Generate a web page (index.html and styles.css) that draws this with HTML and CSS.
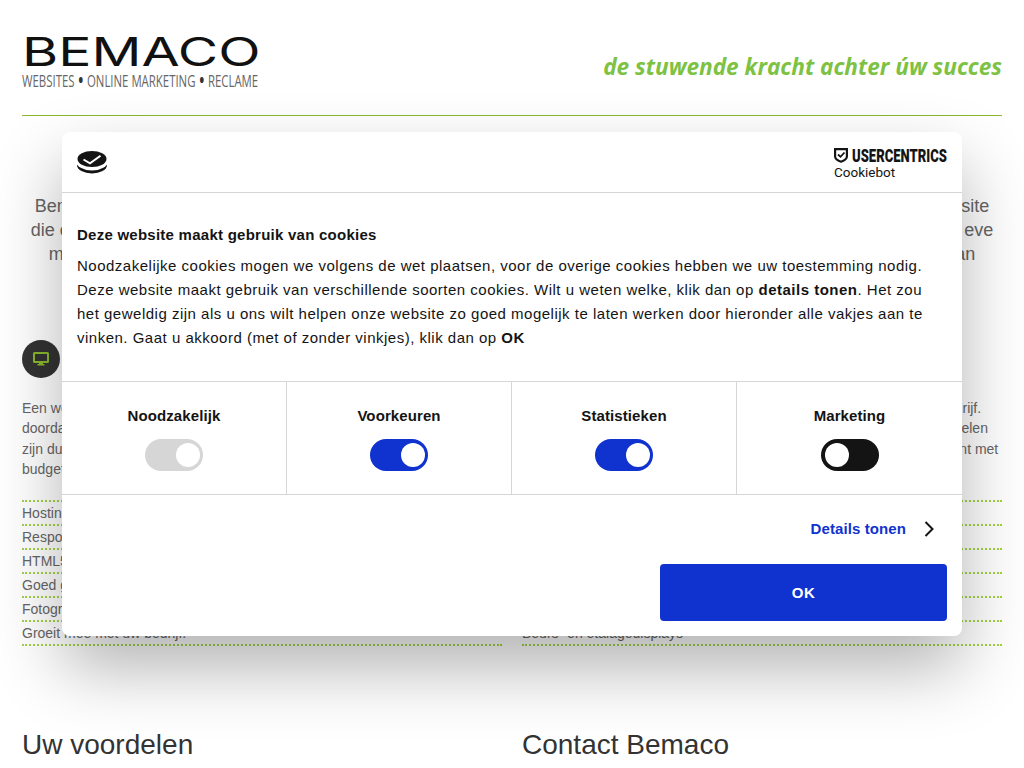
FILE: index.html
```html
<!DOCTYPE html>
<html lang="nl">
<head>
    <meta charset="UTF-8">
    <meta name="viewport" content="width=device-width, initial-scale=1.0">
    <title>Bemaco</title>
    <link rel="stylesheet" href="styles.css">
</head>
<body>
    <div class="page">
        <header class="site-header">
            <div class="brand">
                <div class="brand-name">BEMACO</div>
                <div class="brand-sub">WEBSITES <span class="dot">•</span> ONLINE MARKETING <span class="dot">•</span> RECLAME</div>
            </div>
            <div class="slogan">de stuwende kracht achter úw succes</div>
        </header>

        <p class="intro">
            Bemaco is uw vaste partner voor websites, online marketing en reclame. Wij maken al voor u een professionele website<br>
            die op elk apparaat goed werkt en uw bedrijf beter vindbaar maakt. Ook verzorgen wij al uw reclame, gewoon vlot en eve<br>
            met veel aandacht voor uw bedrijf en voor een eerlijke prijs. Neem dus gerust contact met mij op voor een goed plan
        </p>

        <div class="columns">
            <section class="col">
                <div class="col-head">
                    <span class="round-icon">
                        <svg width="16" height="14" viewBox="0 0 16 14">
                            <rect x="1" y="1" width="14" height="9" rx="0.5" fill="none" stroke="#8ab82c" stroke-width="2"/>
                            <path fill="#8ab82c" d="M6 11h4v1h1.500v1.500h-7V12H6z"/>
                        </svg>
                    </span>
                    <h2>Websites</h2>
                </div>
                <p class="col-text">Een website is het visitekaartje van uw bedrijf. Wij zorgen voor een goede uitstraling<br>doordat wij goed luisteren naar wat u wilt vertellen aan uw klanten en bezoekers<br>zijn duidelijk en eenvoudig te beheren, ook voor kleine ondernemers met een klein<br>budget.</p>
                <ul class="checklist">
                    <li>Hosting en domeinnaam</li>
                    <li>Responsive webdesign</li>
                    <li>HTML5 en CSS3</li>
                    <li>Goed gevonden in Google</li>
                    <li>Fotografie en teksten</li>
                    <li>Groeit mee met uw bedrijf.</li>
                </ul>
            </section>
            <section class="col">
                <div class="col-head">
                    <span class="round-icon"></span>
                    <h2>Reclame</h2>
                </div>
                <p class="col-text">Opvallende reclame zorgt voor wat naamsbekendheid van uw hele bedrijf.<br>Van visitekaartje tot aan de autobelettering, wij verzorgen al die onderdelen<br>en stemmen alles op elkaar af zodat uw huisstijl past, ook voor een klant met<br>een klein budget.</p>
                <ul class="checklist">
                    <li>Huisstijl en logo</li>
                    <li>Drukwerk</li>
                    <li>Autobelettering</li>
                    <li>Spandoeken</li>
                    <li>Gevelreclame</li>
                    <li>Beurs- en etalagedisplays</li>
                </ul>
            </section>
        </div>

        <div class="columns lower">
            <h2 class="lower-title">Uw voordelen</h2>
            <h2 class="lower-title">Contact Bemaco</h2>
        </div>
    </div>

    <div class="cookie-dialog">
        <div class="cookie-top">
            <svg class="cookie-logo" width="30" height="24" viewBox="0 0 30 24">
                <ellipse cx="15" cy="15" rx="15" ry="8.500" fill="#141414"/>
                <ellipse cx="15" cy="11" rx="16" ry="9.500" fill="#fff"/>
                <ellipse cx="15" cy="9" rx="14.500" ry="8" fill="#141414"/>
                <path fill="none" stroke="#fff" stroke-width="2" d="M6.500 9.500l6.500 3.800 10.500-7.500"/>
            </svg>
            <div class="uc-logo">
                <div class="uc-name">
                    <svg width="14" height="15" viewBox="0 0 14 15">
                        <path fill="none" stroke="#141414" stroke-width="2.200" d="M1.100 1.100h11.800v7.400c0 2.500-3 4.200-5.900 5.200-2.900-1-5.900-2.700-5.900-5.200z"/>
                        <path fill="none" stroke="#141414" stroke-width="1.800" d="M4 6.500l2.500 2.300L10.500 4.500"/>
                    </svg>
                    <span class="uc-word">USERCENTRICS</span>
                </div>
                <div class="uc-product">Cookiebot</div>
            </div>
        </div>

        <div class="cookie-body">
            <h3>Deze website maakt gebruik van cookies</h3>
            <p>Noodzakelijke cookies mogen we volgens de wet plaatsen, voor de overige cookies hebben we uw toestemming nodig. Deze website maakt gebruik van verschillende soorten cookies. Wilt u weten welke, klik dan op <b>details tonen</b>. Het zou het geweldig zijn als u ons wilt helpen onze website zo goed mogelijk te laten werken door hieronder alle vakjes aan te vinken. Gaat u akkoord (met of zonder vinkjes), klik dan op <b>OK</b></p>
        </div>

        <div class="toggles">
            <div class="toggle-cell">
                <strong>Noodzakelijk</strong>
                <span class="switch disabled"><span class="knob"></span></span>
            </div>
            <div class="toggle-cell">
                <strong>Voorkeuren</strong>
                <span class="switch on"><span class="knob"></span></span>
            </div>
            <div class="toggle-cell">
                <strong>Statistieken</strong>
                <span class="switch on"><span class="knob"></span></span>
            </div>
            <div class="toggle-cell">
                <strong>Marketing</strong>
                <span class="switch off"><span class="knob"></span></span>
            </div>
        </div>

        <div class="cookie-actions">
            <div class="details-link">
                <span>Details tonen</span>
                <svg width="10" height="16" viewBox="0 0 10 16"><path fill="none" stroke="#141414" stroke-width="2" d="M1.500 1l7 7-7 7"/></svg>
            </div>
            <button class="ok-btn">OK</button>
        </div>
    </div>
</body>
</html>
```

FILE: styles.css
```css
html, body {
    margin: 0;
    height: 768px;
    overflow: hidden;
    background-color: #fff;
}
body {
    font-family: "Liberation Sans", Arial, sans-serif;
    color: #666;
}
.page {
    padding: 0 22px;
}
.site-header {
    display: flex;
    justify-content: space-between;
    align-items: flex-start;
    height: 115px;
    border-bottom: 1px solid #8ab82c;
}
.brand {
    width: 236px;
    padding-top: 32px;
    white-space: nowrap;
}
.brand-name {
    font-family: "Inter", sans-serif;
    font-size: 39px;
    line-height: 39px;
    color: #111;
    transform: scaleX(1.42);
    transform-origin: left center;
}
.brand-sub {
    font-family: "Open Sans", sans-serif;
    font-size: 17px;
    line-height: 20px;
    color: #666;
    transform: scaleX(0.67);
    transform-origin: left center;
}
.dot {
    font-size: 26px;
    line-height: 0;
    color: #333;
    vertical-align: -2px;
}
.slogan {
    font-family: "Open Sans", sans-serif;
    font-style: italic;
    font-weight: 700;
    font-size: 22.600px;
    line-height: 30px;
    margin-top: 52px;
    color: #7dc242;
    white-space: nowrap;
}
.intro {
    margin: 78px 0 0;
    font-size: 18px;
    line-height: 24px;
    text-align: center;
    white-space: nowrap;
}
.columns {
    display: grid;
    grid-template-columns: 480px 480px;
    gap: 20px;
}
.col-head {
    display: flex;
    align-items: center;
    gap: 12px;
    margin-top: 74px;
}
.col-head h2 {
    margin: 0;
    font-size: 28px;
    font-weight: normal;
    color: #333;
}
.round-icon {
    display: flex;
    align-items: center;
    justify-content: center;
    width: 38px;
    height: 38px;
    border-radius: 50%;
    background-color: #333;
}
.col-text {
    margin: 20px 0 0;
    font-size: 14px;
    line-height: 20.300px;
    white-space: nowrap;
}
.checklist {
    list-style: none;
    margin: 21px 0 0;
    padding: 0;
    font-size: 14px;
    border-top: 2px dotted #a4d246;
}
.checklist li {
    height: 22px;
    line-height: 22px;
    border-bottom: 2px dotted #a4d246;
}
.lower {
    margin-top: 81px;
}
.lower-title {
    margin: 0;
    font-size: 28px;
    line-height: 36px;
    font-weight: normal;
    color: #333;
}

.cookie-dialog {
    position: absolute;
    left: 62px;
    top: 132px;
    width: 900px;
    height: 504px;
    background-color: #fff;
    border-radius: 8px;
    box-shadow: 0 32px 68px rgba(0, 0, 0, 0.3);
    color: #141414;
    font-size: 15px;
    letter-spacing: 0.5px;
}
.cookie-top {
    display: flex;
    justify-content: space-between;
    align-items: center;
    height: 60px;
    padding: 0 15px;
    border-bottom: 1px solid #d6d6d6;
}
.uc-logo {
    padding-top: 4px;
}
.uc-name {
    display: flex;
    align-items: center;
    gap: 4px;
    height: 15px;
}
.uc-word {
    display: inline-block;
    width: 95px;
    font-family: "Roboto", sans-serif;
    font-weight: 900;
    font-size: 18px;
    letter-spacing: 0;
    line-height: 15px;
    white-space: nowrap;
    transform: scaleX(0.725);
    transform-origin: left center;
}
.uc-product {
    margin-top: 1px;
    font-family: "Roboto", sans-serif;
    font-size: 13.500px;
    line-height: 16px;
    letter-spacing: 0;
}
.cookie-body {
    height: 189px;
    padding: 30px 15px 0;
    box-sizing: border-box;
    border-bottom: 1px solid #d6d6d6;
}
.cookie-body h3 {
    margin: 0 0 7px;
    font-size: 15px;
    line-height: 24px;
    letter-spacing: 0.25px;
}
.cookie-body p {
    margin: 0;
    line-height: 24px;
}
.toggles {
    display: grid;
    grid-template-columns: repeat(4, 1fr);
    height: 112px;
    border-bottom: 1px solid #d6d6d6;
}
.toggle-cell {
    display: flex;
    flex-direction: column;
    align-items: center;
    padding-top: 22px;
    border-right: 1px solid #d6d6d6;
}
.toggle-cell:last-child {
    border-right: none;
}
.toggle-cell strong {
    line-height: 24px;
    margin-bottom: 11px;
    letter-spacing: 0.1px;
}
.switch {
    display: flex;
    align-items: center;
    width: 58px;
    height: 32px;
    padding: 4px 3px 4px 4px;
    box-sizing: border-box;
    border-radius: 16px;
}
.switch.on {
    background-color: #1032cf;
    justify-content: flex-end;
}
.switch.off {
    background-color: #141414;
    justify-content: flex-start;
}
.switch.disabled {
    background-color: #d6d6d6;
    justify-content: flex-end;
}
.knob {
    width: 24px;
    height: 24px;
    border-radius: 50%;
    background-color: #fff;
}
.cookie-actions {
    display: flex;
    flex-direction: column;
    align-items: flex-end;
    padding: 0 15px;
}
.details-link {
    display: flex;
    align-items: center;
    gap: 18px;
    height: 67px;
    padding-right: 13px;
    padding-bottom: 2px;
    color: #1032cf;
    font-weight: 700;
    letter-spacing: 0.1px;
}
.ok-btn {
    width: 287px;
    height: 57px;
    border: none;
    border-radius: 4px;
    background-color: #1032cf;
    color: #fff;
    font-family: inherit;
    font-size: 15px;
    font-weight: 700;
    letter-spacing: 0.5px;
}
```
